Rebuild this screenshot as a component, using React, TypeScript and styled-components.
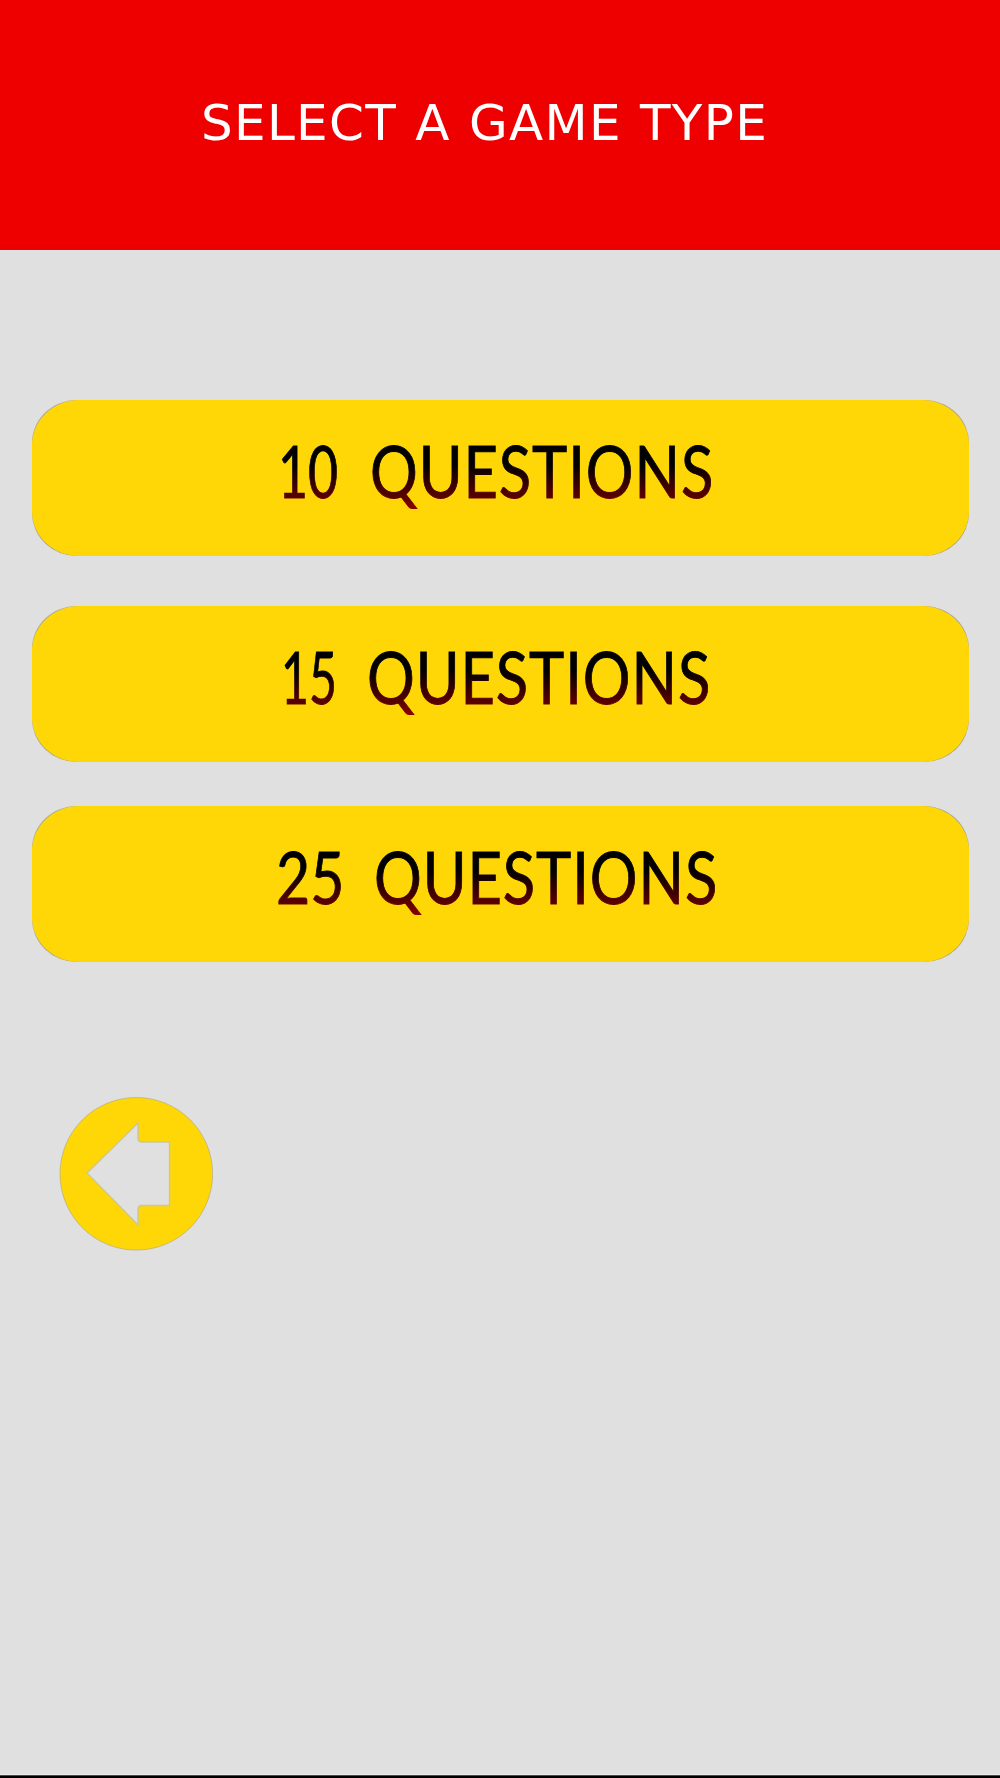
import React from "react";
import styled, { createGlobalStyle } from "styled-components";

const GlobalStyle = createGlobalStyle`
  *, *::before, *::after { box-sizing: border-box; }
  body { margin: 0; background: #e0e0e0; }
  button { appearance: none; border: 0; padding: 0; margin: 0; font: inherit; cursor: pointer; }
`;

const Screen = styled.div`
  display: flex;
  flex-direction: column;
  width: 1000px;
  height: 1778px;
  background: #e0e0e0;
  overflow: hidden;
`;

const Header = styled.header`
  flex: none;
  height: 250px;
  padding: 94px 0 0 201px;
  background: #ef0000;
`;

const Title = styled.h1`
  margin: 0;
  font: 400 50px/59px "DejaVu Sans", sans-serif;
  font-kerning: none;
  letter-spacing: 1.3px;
  word-spacing: 1px;
  color: #fff;
  white-space: nowrap;
`;

const Main = styled.main`
  flex: 1;
  display: flex;
  flex-direction: column;
  align-items: flex-start;
  padding: 150px 31px 0 32px;
`;

const BottomEdge = styled.footer`
  flex: none;
  height: 4px;
  border-top: 1px solid #ebebeb;
  background: linear-gradient(#4a4a4a 1px, #000 1px);
`;

const Option = styled.button<{ $gap: number }>`
  flex: none;
  width: 937px;
  height: 156px;
  margin-bottom: ${(p) => p.$gap}px;
  border-radius: 45px / 43px;
  background: #aaa58c;
`;

const OptionFace = styled.span`
  display: flex;
  justify-content: center;
  width: 100%;
  height: 100%;
  padding: 28px 7px 0 0;
  border-radius: 47px / 45px;
  background: #ffd706;
`;

const Label = styled.span<{ $gap: number }>`
  display: flex;
  gap: ${(p) => p.$gap}px;
  height: 86px;
  font: 400 71px/86px Lato, sans-serif;
  white-space: pre;
`;

const Word = styled.span<{ $width: number }>`
  flex: none;
  width: ${(p) => p.$width}px;
  height: 86px;
`;

const Ink = styled.span<{ $stretch: number; $shift?: number; $tracking?: number }>`
  display: block;
  width: max-content;
  height: 86px;
  margin-left: ${(p) => p.$shift ?? 0}px;
  letter-spacing: ${(p) => p.$tracking ?? 0}px;
  transform: scaleX(${(p) => p.$stretch});
  transform-origin: 0 0;
  color: transparent;
  background: linear-gradient(#000 42%, #600000 82%, #850000 92%);
  background-clip: text;
  -webkit-background-clip: text;
  -webkit-text-stroke: 0.9px transparent;
`;

const Back = styled.button`
  display: block;
  width: 154px;
  height: 154px;
  margin: 89px 0 0 27px;
  background: none;

  svg { display: block; }
`;

const options = [
  { count: "10", width: 57, stretch: 0.73, shift: -4, gap: 50 },
  { count: "15", width: 51, stretch: 0.68, shift: -4, gap: 44 },
  { count: "25", width: 65, stretch: 0.83, shift: -2, gap: 46 },
];

export default function App() {
  return (
    <Screen>
      <GlobalStyle />
      <Header>
        <Title>SELECT A GAME TYPE</Title>
      </Header>
      <Main>
        {options.map((o) => (
          <Option key={o.count} $gap={o.gap}>
            <OptionFace>
              <Label $gap={33}>
                <Word $width={o.width}>
                  <Ink $stretch={o.stretch} $shift={o.shift}>{o.count}</Ink>
                </Word>
                <Word $width={341}>
                  <Ink $stretch={0.84} $shift={-2} $tracking={1.1}>QUESTIONS</Ink>
                </Word>
              </Label>
            </OptionFace>
          </Option>
        ))}
        <Back aria-label="Back">
          <svg width="154" height="154" viewBox="0 0 154 154">
            <circle cx="77.3" cy="76.8" r="76.3" fill="#ffd706" stroke="#aaa58c" strokeWidth="0.6" />
            <path
              d="M28 76 L79 26 V42 Q79.500 45 82 45 H110.500 V108.500 H82 Q79.500 108.500 79 111.500 V128 Z"
              fill="#e0e0e0"
              stroke="#cdc69a"
              strokeWidth="1.4"
            />
          </svg>
        </Back>
      </Main>
      <BottomEdge />
    </Screen>
  );
}
